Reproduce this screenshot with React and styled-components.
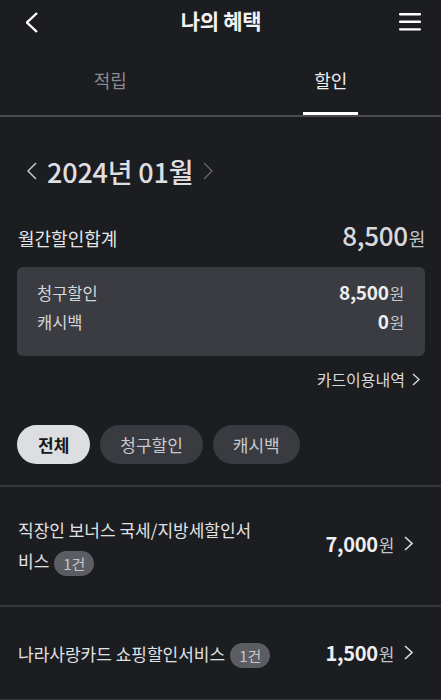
import React from 'react';
import styled, {createGlobalStyle} from "styled-components";

const GlobalStyle = createGlobalStyle`
body {
  margin: 0;
  background: #1c1d21;
  font-family: "Noto Sans CJK KR", "Noto Sans", sans-serif;
  color: #e6e7e9;
}
`;

const Page = styled.div`
width: 441px;
min-height: 700px;
background: #1c1d21;
display: flex;
flex-direction: column;
`;

const TopBar = styled.div`
height: 44px;
display: flex;
align-items: center;
justify-content: space-between;
padding: 0 19px 0 20px;
`;

const Title = styled.div`
font-size: 21px;
font-weight: 700;
color: #f2f2f3;
letter-spacing: -0.3px;
margin-bottom: 4px;
`;

const IconButton = styled.div`
width: 24px;
height: 24px;
display: flex;
align-items: center;
justify-content: center;
`;

const Tabs = styled.div`
display: flex;
height: 71px;
border-bottom: 2px solid #48494d;
`;

const Tab = styled.div`
flex: 1;
display: flex;
justify-content: center;
`;

const TabLabel = styled.div`
height: 100%;
display: flex;
align-items: center;
padding: 4px ${p => p.$active ? "11px" : "0"} 0;
font-size: 18px;
color: ${p => p.$active ? "#eeeff1" : "#8a8b8f"};
border-bottom: 3px solid ${p => p.$active ? "#ffffff" : "transparent"};
margin-bottom: -2px;
box-sizing: border-box;
`;

const MonthRow = styled.div`
display: flex;
align-items: center;
gap: 10px;
padding: 37px 0 0 27px;
height: 34px;
`;

const Month = styled.div`
font-size: 27px;
font-weight: 500;
color: #dedfe2;
letter-spacing: -0.2px;
`;

const Section = styled.div`
padding: 0 16px 0 17px;
`;

const TotalRow = styled.div`
display: flex;
justify-content: space-between;
align-items: baseline;
margin-top: 28px;
padding-left: 1px;
`;

const TotalLabel = styled.div`
font-size: 18px;
color: #e4e5e7;
`;

const Amount = styled.div`
font-size: ${p => p.$size || 20}px;
font-weight: ${p => p.$weight || 500};
color: ${p => p.$color || "#eeeff1"};
letter-spacing: -0.3px;
`;

const Unit = styled.span`
font-size: ${p => p.$size || 16}px;
font-weight: 400;
color: ${p => p.$color || "#c4c5c8"};
margin-left: 1px;
`;

const Card = styled.div`
margin-top: 14px;
background: #3a3c42;
border-radius: 6px;
padding: 11px 21px 24px 20px;
display: flex;
flex-direction: column;
gap: 4px;
`;

const CardRow = styled.div`
display: flex;
justify-content: space-between;
align-items: baseline;
height: 25px;
`;

const CardLabel = styled.div`
font-size: 16.5px;
color: #d4d5d8;
`;

const HistoryLink = styled.div`
display: flex;
justify-content: flex-end;
align-items: center;
gap: 7px;
margin-top: 11px;
padding-right: 5px;
font-size: 16px;
color: #d8d9dc;
`;

const Chips = styled.div`
display: flex;
gap: 10px;
padding: 34px 17px 21px;
border-bottom: 2px solid #37383c;
`;

const Chip = styled.div`
height: 39px;
padding: 0 ${p => p.$pad || 20}px;
border-radius: 20px;
display: flex;
align-items: center;
font-size: 17px;
font-weight: ${p => p.$active ? 700 : 400};
background: ${p => p.$active ? "#dcdee1" : "#393b41"};
color: ${p => p.$active ? "#16171a" : "#c9cacd"};
`;

const ListItem = styled.div`
display: flex;
align-items: center;
justify-content: space-between;
height: ${p => p.$height}px;
padding: 0 28px 0 18px;
border-bottom: 2px solid #37383c;
box-sizing: border-box;
`;

const ItemName = styled.div`
font-size: 17px;
line-height: 31px;
color: #e0e1e4;
max-width: ${p => p.$maxWidth || 280}px;
padding-bottom: ${p => p.$pb || 0}px;
`;

const Count = styled.span`
display: inline-block;
background: #5b5d63;
color: #c6c7ca;
font-size: 15px;
line-height: 25px;
padding: 0 9px;
border-radius: 13px;
margin-left: 5px;
vertical-align: middle;
`;

const ItemAmount = styled.div`
display: flex;
align-items: center;
gap: 10px;
padding-bottom: ${p => p.$pb || 0}px;
`;

const Chevron = ({dir = "right", size = 12, color = "#d8d9dc", width = 1.5, h = 20}) => (
    <svg width={size} height={h} viewBox={`0 0 ${size} ${h}`} fill="none">
        {dir === "right"
            ? <polyline points={`1,1 ${size - 1},${h / 2} 1,${h - 1}`} stroke={color} strokeWidth={width}/>
            : <polyline points={`${size - 1},1 1,${h / 2} ${size - 1},${h - 1}`} stroke={color} strokeWidth={width}/>}
    </svg>
);

const Menu = () => (
    <svg width="24" height="20" viewBox="0 0 24 20">
        <rect x="1" y="1" width="22" height="2.4" rx="1" fill="#fff"/>
        <rect x="1" y="8.6" width="22" height="2.4" rx="1" fill="#fff"/>
        <rect x="1" y="16.2" width="22" height="2.4" rx="1" fill="#fff"/>
    </svg>
);

const App = () => <>
    <GlobalStyle/>
    <Page>
        <TopBar>
            <IconButton>
                <Chevron dir="left" size={12} h={21} width={2.4} color="#fff"/>
            </IconButton>
            <Title>나의 혜택</Title>
            <IconButton>
                <Menu/>
            </IconButton>
        </TopBar>
        <Tabs>
            <Tab><TabLabel>적립</TabLabel></Tab>
            <Tab><TabLabel $active>할인</TabLabel></Tab>
        </Tabs>

        <MonthRow>
            <Chevron dir="left" size={10} h={18} width={1.5} color="#c9cacd"/>
            <Month>2024년 01월</Month>
            <Chevron dir="right" size={10} h={18} width={1.2} color="#6b6c70"/>
        </MonthRow>

        <Section>
            <TotalRow>
                <TotalLabel>월간할인합계</TotalLabel>
                <Amount $size={26} $color="#d8d9dc">8,500<Unit $size={18} $color="#c4c5c8">원</Unit></Amount>
            </TotalRow>
            <Card>
                <CardRow>
                    <CardLabel>청구할인</CardLabel>
                    <Amount $size={19} $weight={600}>8,500<Unit>원</Unit></Amount>
                </CardRow>
                <CardRow>
                    <CardLabel>캐시백</CardLabel>
                    <Amount $size={19} $weight={600}>0<Unit>원</Unit></Amount>
                </CardRow>
            </Card>
            <HistoryLink>
                카드이용내역
                <Chevron size={8} h={13} width={1.4}/>
            </HistoryLink>
        </Section>

        <Chips>
            <Chip $active $pad={21}>전체</Chip>
            <Chip $pad={20}>청구할인</Chip>
            <Chip $pad={20}>캐시백</Chip>
        </Chips>

        <ListItem $height={120}>
            <ItemName $pb={2} $maxWidth={240}>직장인 보너스 국세/지방세할인서비스<Count>1건</Count></ItemName>
            <ItemAmount $pb={6}>
                <Amount $size={20} $weight={600}>7,000<Unit $size={17}>원</Unit></Amount>
                <Chevron size={9} h={15} width={1.6}/>
            </ItemAmount>
        </ListItem>
        <ListItem $height={94}>
            <ItemName $maxWidth={280}>나라사랑카드 쇼핑할인서비스<Count>1건</Count></ItemName>
            <ItemAmount $pb={2}>
                <Amount $size={20} $weight={600}>1,500<Unit $size={17}>원</Unit></Amount>
                <Chevron size={9} h={15} width={1.6}/>
            </ItemAmount>
        </ListItem>
    </Page>
</>;

export default App;
